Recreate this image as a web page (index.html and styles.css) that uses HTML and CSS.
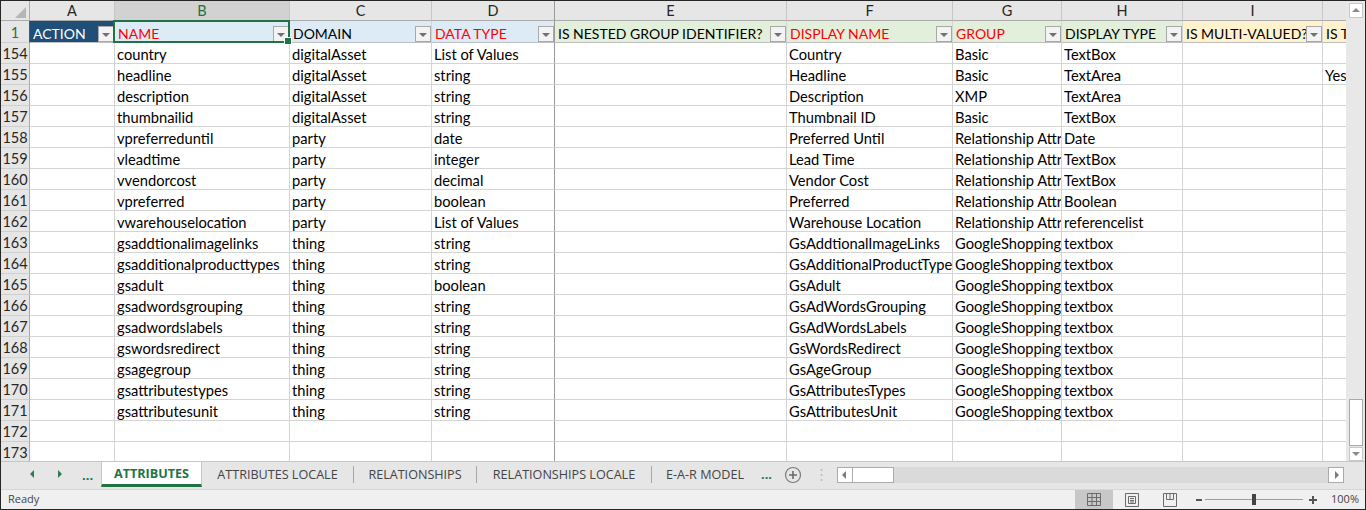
FILE: index.html
```html
<!DOCTYPE html>
<html>
<head>
<meta charset="utf-8">
<link rel="stylesheet" href="styles.css">
</head>
<body>
<div class="window">
  <div class="sheet">
    <div class="grid">
      <div class="corner"><svg width="28" height="19"><polygon points="25,6 25,17 14,17" fill="#b5b5b5"/></svg></div>
      <div class="ch">A</div><div class="ch csel">B</div><div class="ch">C</div><div class="ch fz">D</div><div class="ch">E</div><div class="ch">F</div><div class="ch">G</div><div class="ch">H</div><div class="ch">I</div><div class="ch j"></div>

      <div class="rh rsel hrow">1</div>
      <div class="h hdark"><span class="t">ACTION</span><i class="dd"></i></div>
      <div class="h hb red sel"><span class="t">NAME</span><i class="dd"></i></div>
      <div class="h hb"><span class="t">DOMAIN</span><i class="dd"></i></div>
      <div class="h hb red fz"><span class="t">DATA TYPE</span><i class="dd"></i></div>
      <div class="h hg"><span class="t">IS NESTED GROUP IDENTIFIER?</span><i class="dd"></i></div>
      <div class="h hg red"><span class="t">DISPLAY NAME</span><i class="dd"></i></div>
      <div class="h hg red"><span class="t">GROUP</span><i class="dd"></i></div>
      <div class="h hg"><span class="t">DISPLAY TYPE</span><i class="dd"></i></div>
      <div class="h ho"><span class="t">IS MULTI-VALUED?</span><i class="dd"></i></div>
      <div class="h ho j"><span class="t">IS TRANSLATABLE?</span></div>

      <div class="rh">154</div><div class="c"></div><div class="c">country</div><div class="c">digitalAsset</div><div class="c fz">List of Values</div><div class="c"></div><div class="c">Country</div><div class="c">Basic</div><div class="c">TextBox</div><div class="c"></div><div class="c j"></div>
      <div class="rh">155</div><div class="c"></div><div class="c">headline</div><div class="c">digitalAsset</div><div class="c fz">string</div><div class="c"></div><div class="c">Headline</div><div class="c">Basic</div><div class="c">TextArea</div><div class="c"></div><div class="c j">Yes</div>
      <div class="rh">156</div><div class="c"></div><div class="c">description</div><div class="c">digitalAsset</div><div class="c fz">string</div><div class="c"></div><div class="c">Description</div><div class="c">XMP</div><div class="c">TextArea</div><div class="c"></div><div class="c j"></div>
      <div class="rh">157</div><div class="c"></div><div class="c">thumbnailid</div><div class="c">digitalAsset</div><div class="c fz">string</div><div class="c"></div><div class="c">Thumbnail ID</div><div class="c">Basic</div><div class="c">TextBox</div><div class="c"></div><div class="c j"></div>
      <div class="rh">158</div><div class="c"></div><div class="c">vpreferreduntil</div><div class="c">party</div><div class="c fz">date</div><div class="c"></div><div class="c">Preferred Until</div><div class="c">Relationship Attributes</div><div class="c">Date</div><div class="c"></div><div class="c j"></div>
      <div class="rh">159</div><div class="c"></div><div class="c">vleadtime</div><div class="c">party</div><div class="c fz">integer</div><div class="c"></div><div class="c">Lead Time</div><div class="c">Relationship Attributes</div><div class="c">TextBox</div><div class="c"></div><div class="c j"></div>
      <div class="rh">160</div><div class="c"></div><div class="c">vvendorcost</div><div class="c">party</div><div class="c fz">decimal</div><div class="c"></div><div class="c">Vendor Cost</div><div class="c">Relationship Attributes</div><div class="c">TextBox</div><div class="c"></div><div class="c j"></div>
      <div class="rh">161</div><div class="c"></div><div class="c">vpreferred</div><div class="c">party</div><div class="c fz">boolean</div><div class="c"></div><div class="c">Preferred</div><div class="c">Relationship Attributes</div><div class="c">Boolean</div><div class="c"></div><div class="c j"></div>
      <div class="rh">162</div><div class="c"></div><div class="c">vwarehouselocation</div><div class="c">party</div><div class="c fz">List of Values</div><div class="c"></div><div class="c">Warehouse Location</div><div class="c">Relationship Attributes</div><div class="c">referencelist</div><div class="c"></div><div class="c j"></div>
      <div class="rh">163</div><div class="c"></div><div class="c">gsaddtionalimagelinks</div><div class="c">thing</div><div class="c fz">string</div><div class="c"></div><div class="c">GsAddtionalImageLinks</div><div class="c">GoogleShopping.Attributes</div><div class="c">textbox</div><div class="c"></div><div class="c j"></div>
      <div class="rh">164</div><div class="c"></div><div class="c">gsadditionalproducttypes</div><div class="c">thing</div><div class="c fz">string</div><div class="c"></div><div class="c">GsAdditionalProductTypes</div><div class="c">GoogleShopping.Attributes</div><div class="c">textbox</div><div class="c"></div><div class="c j"></div>
      <div class="rh">165</div><div class="c"></div><div class="c">gsadult</div><div class="c">thing</div><div class="c fz">boolean</div><div class="c"></div><div class="c">GsAdult</div><div class="c">GoogleShopping.Attributes</div><div class="c">textbox</div><div class="c"></div><div class="c j"></div>
      <div class="rh">166</div><div class="c"></div><div class="c">gsadwordsgrouping</div><div class="c">thing</div><div class="c fz">string</div><div class="c"></div><div class="c">GsAdWordsGrouping</div><div class="c">GoogleShopping.Attributes</div><div class="c">textbox</div><div class="c"></div><div class="c j"></div>
      <div class="rh">167</div><div class="c"></div><div class="c">gsadwordslabels</div><div class="c">thing</div><div class="c fz">string</div><div class="c"></div><div class="c">GsAdWordsLabels</div><div class="c">GoogleShopping.Attributes</div><div class="c">textbox</div><div class="c"></div><div class="c j"></div>
      <div class="rh">168</div><div class="c"></div><div class="c">gswordsredirect</div><div class="c">thing</div><div class="c fz">string</div><div class="c"></div><div class="c">GsWordsRedirect</div><div class="c">GoogleShopping.Attributes</div><div class="c">textbox</div><div class="c"></div><div class="c j"></div>
      <div class="rh">169</div><div class="c"></div><div class="c">gsagegroup</div><div class="c">thing</div><div class="c fz">string</div><div class="c"></div><div class="c">GsAgeGroup</div><div class="c">GoogleShopping.Attributes</div><div class="c">textbox</div><div class="c"></div><div class="c j"></div>
      <div class="rh">170</div><div class="c"></div><div class="c">gsattributestypes</div><div class="c">thing</div><div class="c fz">string</div><div class="c"></div><div class="c">GsAttributesTypes</div><div class="c">GoogleShopping.Attributes</div><div class="c">textbox</div><div class="c"></div><div class="c j"></div>
      <div class="rh">171</div><div class="c"></div><div class="c">gsattributesunit</div><div class="c">thing</div><div class="c fz">string</div><div class="c"></div><div class="c">GsAttributesUnit</div><div class="c">GoogleShopping.Attributes</div><div class="c">textbox</div><div class="c"></div><div class="c j"></div>
      <div class="rh">172</div><div class="c"></div><div class="c"></div><div class="c"></div><div class="c fz"></div><div class="c"></div><div class="c"></div><div class="c"></div><div class="c"></div><div class="c"></div><div class="c j"></div>
      <div class="rh">173</div><div class="c"></div><div class="c"></div><div class="c"></div><div class="c fz"></div><div class="c"></div><div class="c"></div><div class="c"></div><div class="c"></div><div class="c"></div><div class="c j"></div>
    </div>
    <div class="vscroll">
      <div class="sbtn"><svg width="12" height="13"><polygon points="2,8 10,8 6,4" fill="#8a8a8a"/></svg></div>
      <div class="vthumb"></div>
      <div class="sbtn down"><svg width="12" height="12"><polygon points="2,4 10,4 6,8" fill="#8a8a8a"/></svg></div>
    </div>
  </div>

  <div class="tabbar">
    <div class="nav">
      <svg class="navarr" width="6" height="9"><polygon points="5,0 5,8 1,4" fill="#2e7d4f"/></svg>
      <svg class="navarr r" width="6" height="9"><polygon points="1,0 1,8 5,4" fill="#2e7d4f"/></svg>
      <span class="navdots">...</span>
    </div>
    <div class="tab active">ATTRIBUTES</div>
    <div class="tab t2">ATTRIBUTES LOCALE</div>
    <div class="sep"></div>
    <div class="tab t3">RELATIONSHIPS</div>
    <div class="sep"></div>
    <div class="tab t4">RELATIONSHIPS LOCALE</div>
    <div class="sep"></div>
    <div class="tab t5">E-A-R MODEL</div>
    <div class="more">...</div>
    <div class="addtab"><svg width="18" height="18"><circle cx="9" cy="9" r="7.5" fill="none" stroke="#7a7a7a" stroke-width="1.2"/><path d="M5 9H13M9 5V13" stroke="#6a6a6a" stroke-width="1.6"/></svg></div>
    <div class="vdots"><svg width="3" height="14"><circle cx="1.5" cy="2" r="1" fill="#b8b8b8"/><circle cx="1.5" cy="7" r="1" fill="#b8b8b8"/><circle cx="1.5" cy="12" r="1" fill="#b8b8b8"/></svg></div>
    <div class="hscroll">
      <div class="hbtn"><svg width="14" height="14"><polygon points="8,3 8,11 4,7" fill="#7a7a7a"/></svg></div>
      <div class="hthumb"></div>
      <div class="htrack"></div>
      <div class="hbtn"><svg width="14" height="14"><polygon points="6,3 6,11 10,7" fill="#7a7a7a"/></svg></div>
    </div>
  </div>

  <div class="status">
    <span class="ready">Ready</span>
    <div class="sright">
      <div class="vb on"><svg width="14" height="13"><path d="M0.5 0.5H13.5V12.5H0.5Z M0.5 4.5H13.5 M0.5 8.5H13.5 M5 0.5V12.5 M9.5 0.5V12.5" fill="none" stroke="#6b6b6b"/></svg></div>
      <div class="vb"><svg width="14" height="14"><path d="M0.5 0.5H13.5V13.5H0.5Z M3.5 3.5H10.5V10.5H3.5Z M5 5.5H9 M5 7.5H9 M5 9H9" fill="none" stroke="#6b6b6b"/></svg></div>
      <div class="vb"><svg width="14" height="14"><path d="M0.5 0.5H13.5V13.5H0.5Z M3.5 0.5V6.5H10.5V0.5 M7 0.5V6.5" fill="none" stroke="#6b6b6b"/></svg></div>
      <div class="zoomctl"><svg width="131" height="19"><path d="M7 10H13" stroke="#555" stroke-width="2"/><path d="M16 9.5H114" stroke="#9e9e9e" stroke-width="1"/><rect x="63" y="4" width="4" height="11" fill="#444"/><path d="M120 10H128M124 6V14" stroke="#555" stroke-width="2"/></svg></div>
      <span class="pct">100%</span>
    </div>
  </div>
</div>
</body>
</html>
```

FILE: styles.css
```css
* { box-sizing: border-box; margin: 0; padding: 0; }
body { margin: 0; background: #fff; font-family: Lato, "Liberation Sans", sans-serif; }

.window {
  width: 1366px; height: 510px;
  border: 1px solid #262626;
  display: flex; flex-direction: column;
  overflow: hidden; background: #fff;
}

.sheet { display: flex; height: 460px; flex: none; overflow: hidden; }

.grid {
  display: grid;
  grid-template-columns: 29px 85px 175px 142px 123px 232px 166px 109px 121px 140px 23px;
  grid-template-rows: 20px 22px;
  grid-auto-rows: 21px;
  width: 1345px; flex: none;
  overflow: hidden;
  font-size: 14.7px; line-height: 20px; color: #000;
}

.corner { background: #e6e6e6; border-right: 1px solid #ababab; border-bottom: 1px solid #ababab; }
.corner svg { display: block; }

.ch {
  background: #e6e6e6;
  border-right: 1px solid #c6c6c6; border-bottom: 1px solid #ababab;
  text-align: center; line-height: 19px; color: #262626; font-size: 14.5px;
}
.ch.csel { background: #d2d2d2; color: #217346; }

.rh {
  background: #e6e6e6;
  border-right: 1px solid #ababab; border-bottom: 1px solid #cfcfcf;
  text-align: center; color: #262626; font-size: 14.5px;
  padding-top: 1px;
}
.rh.hrow { line-height: 21px; padding-top: 1px; }
.rh.rsel { color: #217346; border-right-color: #217346; }

.c {
  border-right: 1px solid #d4d4d4; border-bottom: 1px solid #d4d4d4;
  padding-left: 2px; padding-top: 1px;
  white-space: nowrap; overflow: hidden;
}
.fz { border-right-color: #9a9a9a !important; }
.j { border-right: none !important; }

.h {
  display: flex; align-items: flex-end;
  padding-left: 3px;
  border-right: 1px solid #d4d4d4; border-bottom: 1px solid #bfbfbf;
  line-height: 21px; overflow: hidden; font-size: 14px;
}
.h .t { flex: 1 1 auto; min-width: 0; overflow: hidden; white-space: nowrap; padding-top: 2px; align-self: stretch; }
.hdark { background: #1f4e78; color: #fff; }
.hb { background: #ddebf7; }
.hg { background: #e2efda; }
.ho { background: #fff2cc; }
.red { color: #ff0000; }

.dd {
  flex: none; width: 16px; height: 16px;
  border: 1px solid #a9a9a9; background: #f3f3f3;
  display: flex; align-items: center; justify-content: center;
}
.dd::before {
  content: ""; display: block; margin-top: 1px;
  border-left: 4px solid transparent; border-right: 4px solid transparent;
  border-top: 4px solid #707070;
}

.sel { position: relative; overflow: visible; }
.sel::after {
  content: ""; position: absolute;
  left: -2px; top: -1px; right: -1px; bottom: -1px;
  border: 2px solid #217346; pointer-events: none;
}
.sel::before {
  content: ""; position: absolute; z-index: 2;
  right: -3px; bottom: -3px; width: 6px; height: 6px;
  background: #217346; border: 1px solid #fff;
}

.vscroll {
  width: 19px; flex: none;
  background: #e8e8e8;
  display: flex; flex-direction: column;
  padding: 2px 2px 0 3px;
}
.sbtn {
  height: 15px; width: 14px; background: #fff; border: 1px solid #c8c8c8;
  display: flex; align-items: center; justify-content: center;
}
.sbtn.down { height: 14px; }
.sbtn svg { display: block; }
.vthumb { margin-top: auto; height: 47px; width: 14px; background: #fff; border: 1px solid #a9a9a9; margin-bottom: 1px; }

.tabbar {
  height: 28px; flex: none;
  display: flex; align-items: stretch;
  background: #e6e6e6; border-top: 1px solid #c6c6c6;
  font-family: "Open Sans", "Liberation Sans", sans-serif;
  font-size: 12.6px; color: #444;
}
.nav { width: 100px; flex: none; display: flex; align-items: center; padding-bottom: 2px; }
.navarr { display: block; margin-left: 28px; }
.navarr.r { margin-left: 22px; }
.navdots { margin-left: 19px; color: #217346; font-weight: 700; font-size: 13px; }

.tab { flex: none; display: flex; align-items: center; justify-content: center; white-space: nowrap; padding-bottom: 3px; }
.tab.active {
  width: 101px; height: 25px;
  background: #fff; color: #217346; font-weight: 700;
  border-left: 1px solid #c6c6c6; border-right: 1px solid #c6c6c6;
  border-bottom: 3px solid #217346;
  padding-top: 1px; padding-bottom: 0;
}
.t2 { width: 151px; }
.t3 { width: 122px; }
.t4 { width: 174px; }
.t5 { width: 106px; }
.sep { width: 1px; flex: none; height: 17px; align-self: center; background: #a6a6a6; margin-bottom: 2px; }
.more { width: 17px; flex: none; display: flex; align-items: center; justify-content: center; color: #217346; font-weight: 700; padding-bottom: 3px; }
.addtab { width: 35px; flex: none; display: flex; align-items: center; justify-content: center; padding-bottom: 2px; }
.addtab svg, .vdots svg { display: block; }
.vdots { width: 22px; flex: none; display: flex; align-items: center; justify-content: center; margin-right: 5px; padding-bottom: 2px; }

.hscroll {
  width: 507px; height: 16px; flex: none; align-self: center;
  display: flex; background: #dadada; margin-bottom: 2px;
}
.hbtn {
  width: 16px; height: 16px; flex: none; background: #fff; border: 1px solid #ababab;
  display: flex; align-items: center; justify-content: center;
}
.hbtn svg { display: block; }
.hthumb { width: 41px; flex: none; background: #fff; border: 1px solid #ababab; border-left: none; }
.htrack { flex: 1; }

.status {
  height: 20px; flex: none;
  background: #f0f0f0; border-top: 1px solid #d6d6d6;
  display: flex; align-items: stretch;
  font-family: "Open Sans", "Liberation Sans", sans-serif;
  font-size: 11px; color: #444;
}
.ready { padding-left: 7px; line-height: 18px; }
.sright { margin-left: auto; width: 290px; display: flex; align-items: stretch; }
.vb { width: 38px; flex: none; display: flex; align-items: center; justify-content: center; }
.vb.on { background: #c8c8c8; }
.vb svg, .zoomctl svg { display: block; }
.zoomctl { width: 131px; flex: none; }
.pct { flex: 1; text-align: right; padding-right: 6px; line-height: 18px; }
```
